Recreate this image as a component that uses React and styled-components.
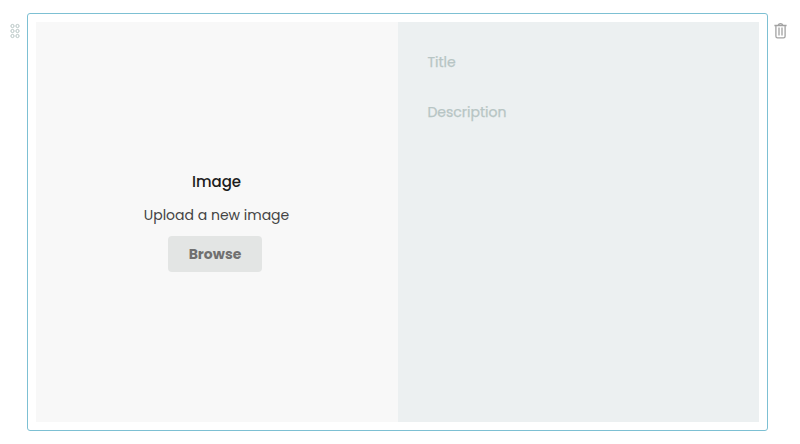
import React from "react";
import styled, { createGlobalStyle } from "styled-components";

const GlobalStyle = createGlobalStyle`
  * { box-sizing: border-box; }
  body {
    margin: 0;
    background: #fff;
    font-family: Poppins, Inter, sans-serif;
    font-size: 14px;
  }
`;

const Block = styled.main`
  display: grid;
  grid-template-columns: 27px 741px 32px;
  height: 444px;
  padding: 13px 0;
`;

const Handle = styled.div`
  padding: 10px 0 0 10px;
  svg { display: block; }
`;

const DeleteButton = styled.button`
  align-self: start;
  border: 0;
  padding: 9px 0 0 6px;
  background: none;
  svg { display: block; }
`;

const Frame = styled.section`
  display: grid;
  grid-template-columns: 362px 361px;
  border: 1px solid #7dc0d3;
  border-radius: 3px;
  padding: 8px;
`;

const ImagePane = styled.div`
  display: flex;
  flex-direction: column;
  align-items: center;
  background: #f8f8f8;
  padding-top: 148px;
`;

const Heading = styled.h2`
  margin: 0 1px 0 0;
  color: #1c1c1c;
  font-size: 15px;
  font-weight: 500;
  line-height: 24px;
`;

const Hint = styled.p`
  margin: 9px 1px 9px 0;
  color: #444;
  font-size: 14px;
  line-height: 24px;
`;

const Browse = styled.button`
  width: 94px;
  height: 36px;
  margin-right: 4px;
  border: 0;
  border-radius: 4px;
  padding: 0;
  background: #e3e5e4;
  color: #707070;
  font: inherit;
  font-weight: 700;
`;

const TextPane = styled.div`
  display: flex;
  flex-direction: column;
  gap: 26px;
  padding: 28px 29px 28px 29.4px;
  background: #ecf0f1;
`;

const Field = styled.div`
  color: #b7c5c4;
  line-height: 24px;
  font-weight: 400;
  -webkit-text-stroke: 0.25px #b7c5c4;
`;

export default function App() {
  return (
    <>
      <GlobalStyle />
      <Block>
        <Handle>
          <svg width="10" height="16" viewBox="0 0 10 16" fill="none" stroke="#b7c5c4">
            {[3, 8, 13].map((y) => (
              <React.Fragment key={y}>
                <circle cx="2.5" cy={y} r="1.6" />
                <circle cx="7.5" cy={y} r="1.6" />
              </React.Fragment>
            ))}
          </svg>
        </Handle>
        <Frame>
          <ImagePane>
            <Heading>Image</Heading>
            <Hint>Upload a new image</Hint>
            <Browse>Browse</Browse>
          </ImagePane>
          <TextPane>
            <Field>Title</Field>
            <Field>Description</Field>
          </TextPane>
        </Frame>
        <DeleteButton aria-label="Delete">
          <svg width="13" height="17" viewBox="0 0 13 17" fill="none" stroke="#a2a2a2">
            <path d="M0.4 3.5H12.6M4.3 3Q4.7 1.6 6.5 1.6T8.7 3M1.9 3.5V14.3Q1.9 15.9 3.5 15.9H9.5Q11.1 15.9 11.1 14.3V3.5" strokeWidth="1.3" />
            <path d="M5 5.5V13.5M8 5.5V13.5" strokeWidth="1.3" />
          </svg>
        </DeleteButton>
      </Block>
    </>
  );
}
